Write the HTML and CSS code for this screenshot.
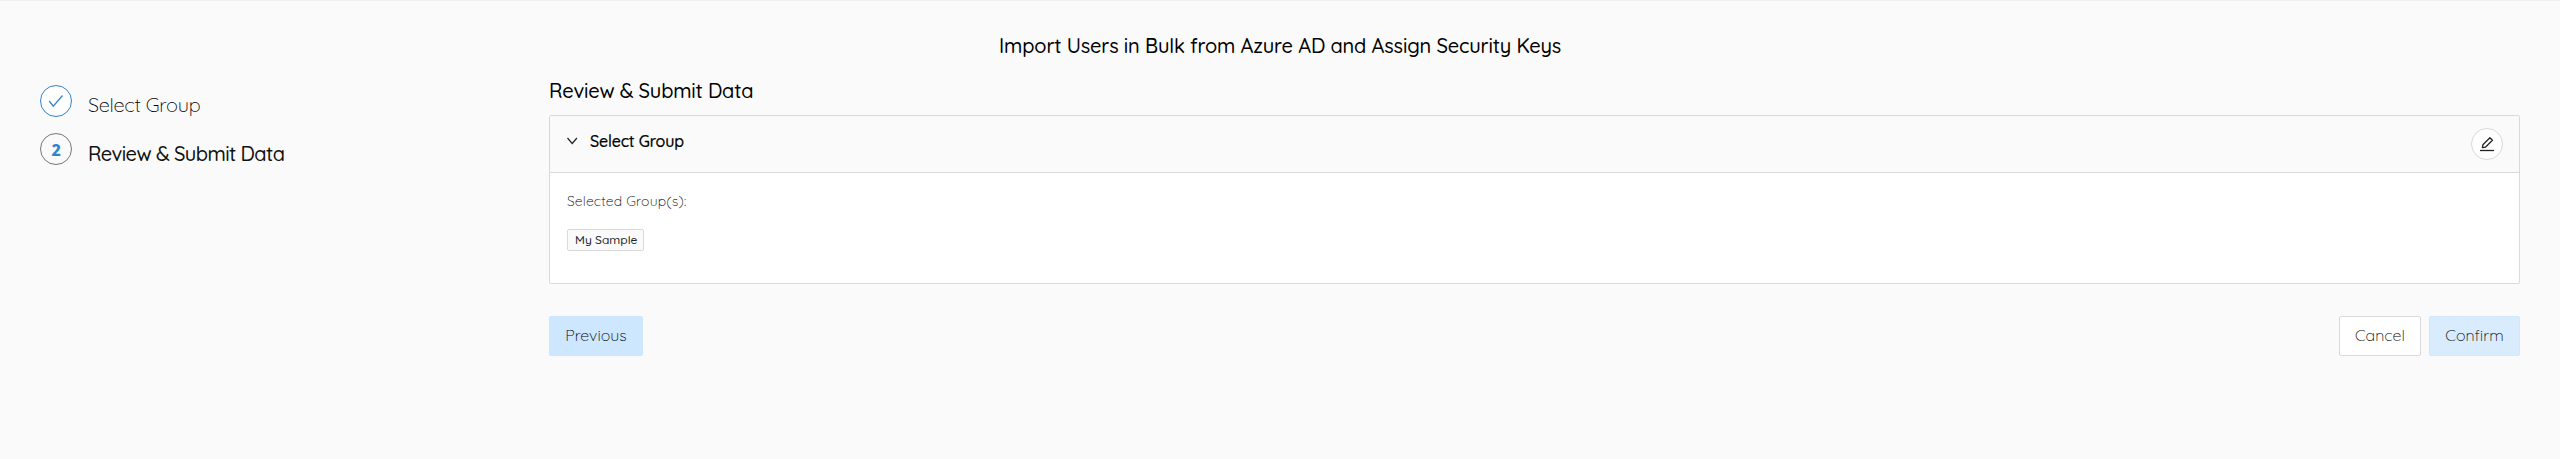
FILE: index.html
```html
<!DOCTYPE html>
<html lang="en">
<head>
<meta charset="utf-8">
<title>Import Users</title>
<link rel="stylesheet" href="styles.css">
</head>
<body>
<main class="page">
  <h1 class="title"><span>Import Users in Bulk from Azure AD and Assign Security Keys</span></h1>
  <div class="layout">
    <ol class="steps">
      <li class="step done">
        <span class="badge"><svg width="16" height="16" viewBox="0 0 64 64"><path d="M5 32 L21 53 L58 10" fill="none" stroke="#3182ce" stroke-width="5"/></svg></span>
        <span class="step-label">Select Group</span>
      </li>
      <li class="step current">
        <span class="badge">2</span>
        <span class="step-label">Review &amp; Submit Data</span>
      </li>
    </ol>
    <section class="content">
      <h2 class="heading">Review &amp; Submit Data</h2>
      <div class="card">
        <header class="card-head">
          <svg class="chevron" width="12" height="10" viewBox="0 0 12 10"><path d="M.5 2 L5.2 7.5 L9.9 2" fill="none" stroke="#222" stroke-width="1.2"/></svg>
          <span class="card-title">Select Group</span>
          <button class="edit" aria-label="Edit"><svg width="16" height="16" viewBox="0 0 16 16" fill="none" stroke="#222"><path d="M1 14.5H15" stroke-width="1.3"/><path d="M3.4 11.7 L3.9 8.8 L10.9 1.8 L13.4 4.3 L6.4 11.2 Z" stroke-width="1.3" stroke-linejoin="round"/></svg></button>
        </header>
        <div class="card-body">
          <p class="field">Selected Group(s):</p>
          <span class="tag">My Sample</span>
        </div>
      </div>
      <div class="actions">
        <button class="btn previous">Previous</button>
        <button class="btn cancel">Cancel</button>
        <button class="btn confirm">Confirm</button>
      </div>
    </section>
  </div>
</main>
</body>
</html>
```
FILE: styles.css
```css
* { box-sizing: border-box; }
body {
  margin: 0;
  background: #fafafa;
  color: #000;
  font-family: Quicksand, Lato, sans-serif;
}
h1, h2, p, ol { margin: 0; padding: 0; font-weight: 500; }
button { font-family: inherit; padding: 0; }
svg { display: block; }
.page { height: 459px; border-top: 1px solid #f0f0f0; padding: 29px 40px 0; }
.title { height: 32px; font-size: 20px; line-height: 32px; text-align: center; letter-spacing: -.16px; }
.layout { display: flex; padding-top: 12px; }
.steps { width: 509px; list-style: none; padding-top: 11px; display: flex; flex-direction: column; gap: 16px; }
.step { display: flex; gap: 16px; height: 32px; }
.badge {
  width: 32px; height: 32px; border: 1px solid #777; border-radius: 50%;
  display: flex; align-items: center; justify-content: center;
  color: #3182ce; font: 800 16px "Noto Sans", sans-serif; padding-top: 2px;
}
.done .badge { border-color: #3182ce; background: #fff; padding: 0; }
.step-label { font-size: 20px; line-height: 32px; padding-top: 4px; color: #111; }
.done .step-label { font-weight: 300; letter-spacing: -.25px; color: #000; }
.current .step-label { font-weight: 500; padding-top: 5px; letter-spacing: -.6px; }
.content { flex: 1; }
.heading { font-size: 20px; line-height: 32px; height: 41px; padding-top: 1px; letter-spacing: -.2px; }
.card { height: 169px; border: 1px solid #d9d9d9; border-radius: 2px; background: #fff; }
.card-head { display: flex; height: 57px; border-bottom: 1px solid #d9d9d9; background: #fafafa; padding: 12px 16px 0 17px; }
.chevron { margin-top: 8px; }
.card-title { font-size: 16px; font-weight: 500; line-height: 26px; margin-left: 11px; letter-spacing: -.15px; -webkit-text-stroke: .2px #000; }
.edit { width: 32px; height: 32px; margin-left: auto; border: 1px solid #d9d9d9; border-radius: 50%; background: #fff; display: flex; align-items: center; justify-content: center; }
.card-body { padding: 17px 17px; }
.field { font-size: 14px; font-weight: 300; line-height: 22px; height: 39px; color: #000; letter-spacing: .17px; }
.tag { display: block; width: 77px; height: 22px; border: 1px solid #d9d9d9; border-radius: 2px; background: #fafafa; padding-left: 7px; font-size: 12px; font-weight: 500; line-height: 20px; color: #222; }
.actions { display: flex; padding-top: 32px; gap: 8px; }
.btn { height: 40px; border: 1px solid #d9d9d9; border-radius: 2px; background: #fff; font-size: 16px; font-weight: 300; color: #000; line-height: 36px; padding-bottom: 2px; }
.previous { width: 94px; background: #cce7ff; border-color: #cce7ff; margin-right: auto; }
.cancel { width: 82px; }
.confirm { width: 91px; background: #d9ecfd; border-color: #cfe8fe; }
```
